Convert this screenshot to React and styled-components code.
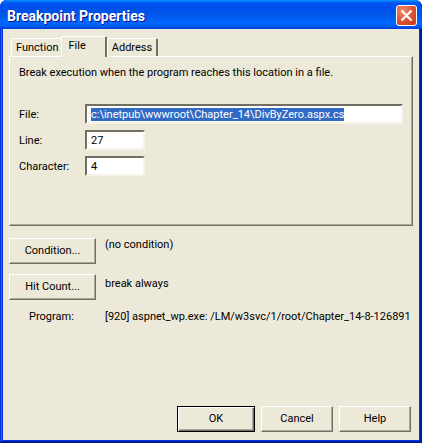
import { useEffect, useRef, useState } from 'react';
import styled, { createGlobalStyle } from 'styled-components';

const tabs = ['Function', 'File', 'Address'];

function App() {
  const [activeTab, setActiveTab] = useState('File');
  const [file, setFile] = useState(
    'c:\\inetpub\\wwwroot\\Chapter_14\\DivByZero.aspx.cs'
  );
  const [line, setLine] = useState('27');
  const [character, setCharacter] = useState('4');
  const fileInput = useRef(null);

  useEffect(() => {
    fileInput.current.focus();
    fileInput.current.select();
  }, []);

  return (
    <>
      <GlobalStyle />
      <Dialog role="dialog" aria-labelledby="dialog-title">
        <TitleBar>
          <Title id="dialog-title">Breakpoint Properties</Title>
          <CloseButton type="button" aria-label="Close">
            <svg width="13" height="13" viewBox="0 0 13 13">
              <path
                d="M1.5 1.5 L11.5 11.5 M11.5 1.5 L1.5 11.5"
                stroke="#fff"
                strokeWidth="2.2"
              />
            </svg>
          </CloseButton>
        </TitleBar>
        <Body>
          <TabList role="tablist">
            {tabs.map((tab) => (
              <Tab
                key={tab}
                type="button"
                role="tab"
                aria-selected={tab === activeTab}
                $active={tab === activeTab}
                onClick={() => setActiveTab(tab)}
              >
                {tab}
              </Tab>
            ))}
          </TabList>
          <Panel role="tabpanel">
            <Intro>
              Break execution when the program reaches this location in a file.
            </Intro>
            <Fields>
              <Label htmlFor="file">File:</Label>
              <Input
                id="file"
                ref={fileInput}
                value={file}
                spellCheck={false}
                onChange={(e) => setFile(e.target.value)}
              />
              <Label htmlFor="line">Line:</Label>
              <Input
                id="line"
                $short
                value={line}
                onChange={(e) => setLine(e.target.value)}
              />
              <Label htmlFor="character">Character:</Label>
              <Input
                id="character"
                $short
                value={character}
                onChange={(e) => setCharacter(e.target.value)}
              />
            </Fields>
          </Panel>
          <Settings>
            <Button type="button">Condition...</Button>
            <Value>(no condition)</Value>
            <Button type="button">Hit Count...</Button>
            <Value $low>break always</Value>
            <ProgramLabel>Program:</ProgramLabel>
            <Program>
              [920] aspnet_wp.exe: /LM/w3svc/1/root/Chapter_14-8-126891
            </Program>
          </Settings>
          <Footer>
            <OkButton type="button">OK</OkButton>
            <Button type="button">Cancel</Button>
            <Button type="button">Help</Button>
          </Footer>
        </Body>
      </Dialog>
    </>
  );
}

export default App;

const GlobalStyle = createGlobalStyle`
  * {
    box-sizing: border-box;
  }
  body {
    margin: 0;
    background: #fff;
  }
  body, button, input {
    font-family: Roboto, sans-serif;
    font-size: 11px;
    line-height: 14px;
    color: #000;
  }
`;
const Dialog = styled.div`
  display: flex;
  flex-direction: column;
  min-height: 100vh;
  padding: 0 3px 3px;
  border-radius: 7px 7px 0 0;
  background: #0831d9;
  box-shadow: inset -1px -1px #00138c, inset 1px 0 #0831d9,
    inset -2px -2px #001ea0, inset 2px 0 #166aee;
  overflow: hidden;
`;
const TitleBar = styled.div`
  display: flex;
  align-items: center;
  justify-content: space-between;
  height: 29px;
  margin: 0 -3px;
  padding: 2px 5px 0 7px;
  border-radius: 7px 7px 0 0;
  background: linear-gradient(
    #0997ff 0,
    #0053ee 3px,
    #0050ee 8px,
    #0055e5 14px,
    #0066ff 22px,
    #0066ff 25px,
    #003dd7 29px
  );
`;
const Title = styled.h1`
  margin: 0;
  font-size: 14px;
  line-height: 16px;
  font-weight: 700;
  color: #fff;
  text-shadow: 1px 1px #0f1089;
`;
const CloseButton = styled.button`
  display: flex;
  align-items: center;
  justify-content: center;
  width: 21px;
  height: 21px;
  padding: 0;
  border: 1px solid #fff;
  border-radius: 3px;
  background: radial-gradient(circle at 30% 25%, #ee8c6c, #dc5030 55%, #c03a14);
`;
const Body = styled.div`
  display: flex;
  flex: 1;
  flex-direction: column;
  padding: 7px 6px 8px;
  background: #ece9d8;
`;
const TabList = styled.div`
  display: flex;
  align-items: flex-end;
  height: 21px;
  padding-left: 2px;
  margin-bottom: -1px;
`;
const Tab = styled.button`
  position: relative;
  z-index: ${({ $active }) => ($active ? 1 : 0)};
  height: ${({ $active }) => ($active ? '21px' : '18px')};
  margin-bottom: ${({ $active }) => ($active ? '0' : '1px')};
  margin-left: ${({ $active }) => ($active ? '-3px' : '0')};
  padding: ${({ $active }) => ($active ? '0 19px 2px 6px' : '0 4px')};
  border: 0 solid;
  border-width: 1px 2px 0 1px;
  border-color: #fff #716f64 #fff #fff;
  border-radius: 2px 2px 0 0;
  background: #ece9d8;
`;
const Panel = styled.div`
  padding: 9px 9px 49px;
  border: 1px solid;
  border-color: #fff #716f64 #716f64 #fff;
  box-shadow: inset -1px -1px #aca899;
`;
const Intro = styled.p`
  margin: 0 0 24px;
`;
const Fields = styled.div`
  display: grid;
  grid-template-columns: 66px 1fr;
  row-gap: 6px;
  align-items: center;
`;
const Label = styled.label`
  padding-top: 2px;
  white-space: nowrap;
`;
const Input = styled.input`
  width: ${({ $short }) => ($short ? '60px' : '100%')};
  height: 20px;
  padding: 1px 4px;
  border: 2px solid;
  border-color: #716f64 #f6f4ea #f6f4ea #716f64;
  border-radius: 0;
  background: #fff;
  outline: none;

  &::selection {
    background: #316ac5;
    color: #fff;
  }
`;
const Settings = styled.div`
  display: grid;
  grid-template-columns: 87px 1fr;
  gap: 10px 9px;
  margin-top: 12px;
`;
const Button = styled.button`
  height: 26px;
  padding: 0 4px;
  border: 1px solid;
  border-color: #fff #716f64 #716f64 #fff;
  border-radius: 0;
  background: #ece9d8;
  box-shadow: inset -1px -1px #aca899;
  white-space: nowrap;
`;
const Value = styled.span`
  padding-top: ${({ $low }) => ($low ? '3px' : '0')};
`;
const ProgramLabel = styled.span`
  padding-left: 20px;
`;
const Program = styled.span`
  min-width: 0;
  white-space: nowrap;
`;
const Footer = styled.div`
  display: flex;
  justify-content: flex-end;
  gap: 6px;
  margin-top: auto;
  padding-right: 2px;

  ${Button} {
    width: 72px;
  }
`;
const OkButton = styled(Button)`
  && {
    width: 78px;
    border-color: #000;
    box-shadow: inset 1px 1px #fff, inset -1px -1px #716f64,
      inset -2px -2px #aca899;
  }
`;
